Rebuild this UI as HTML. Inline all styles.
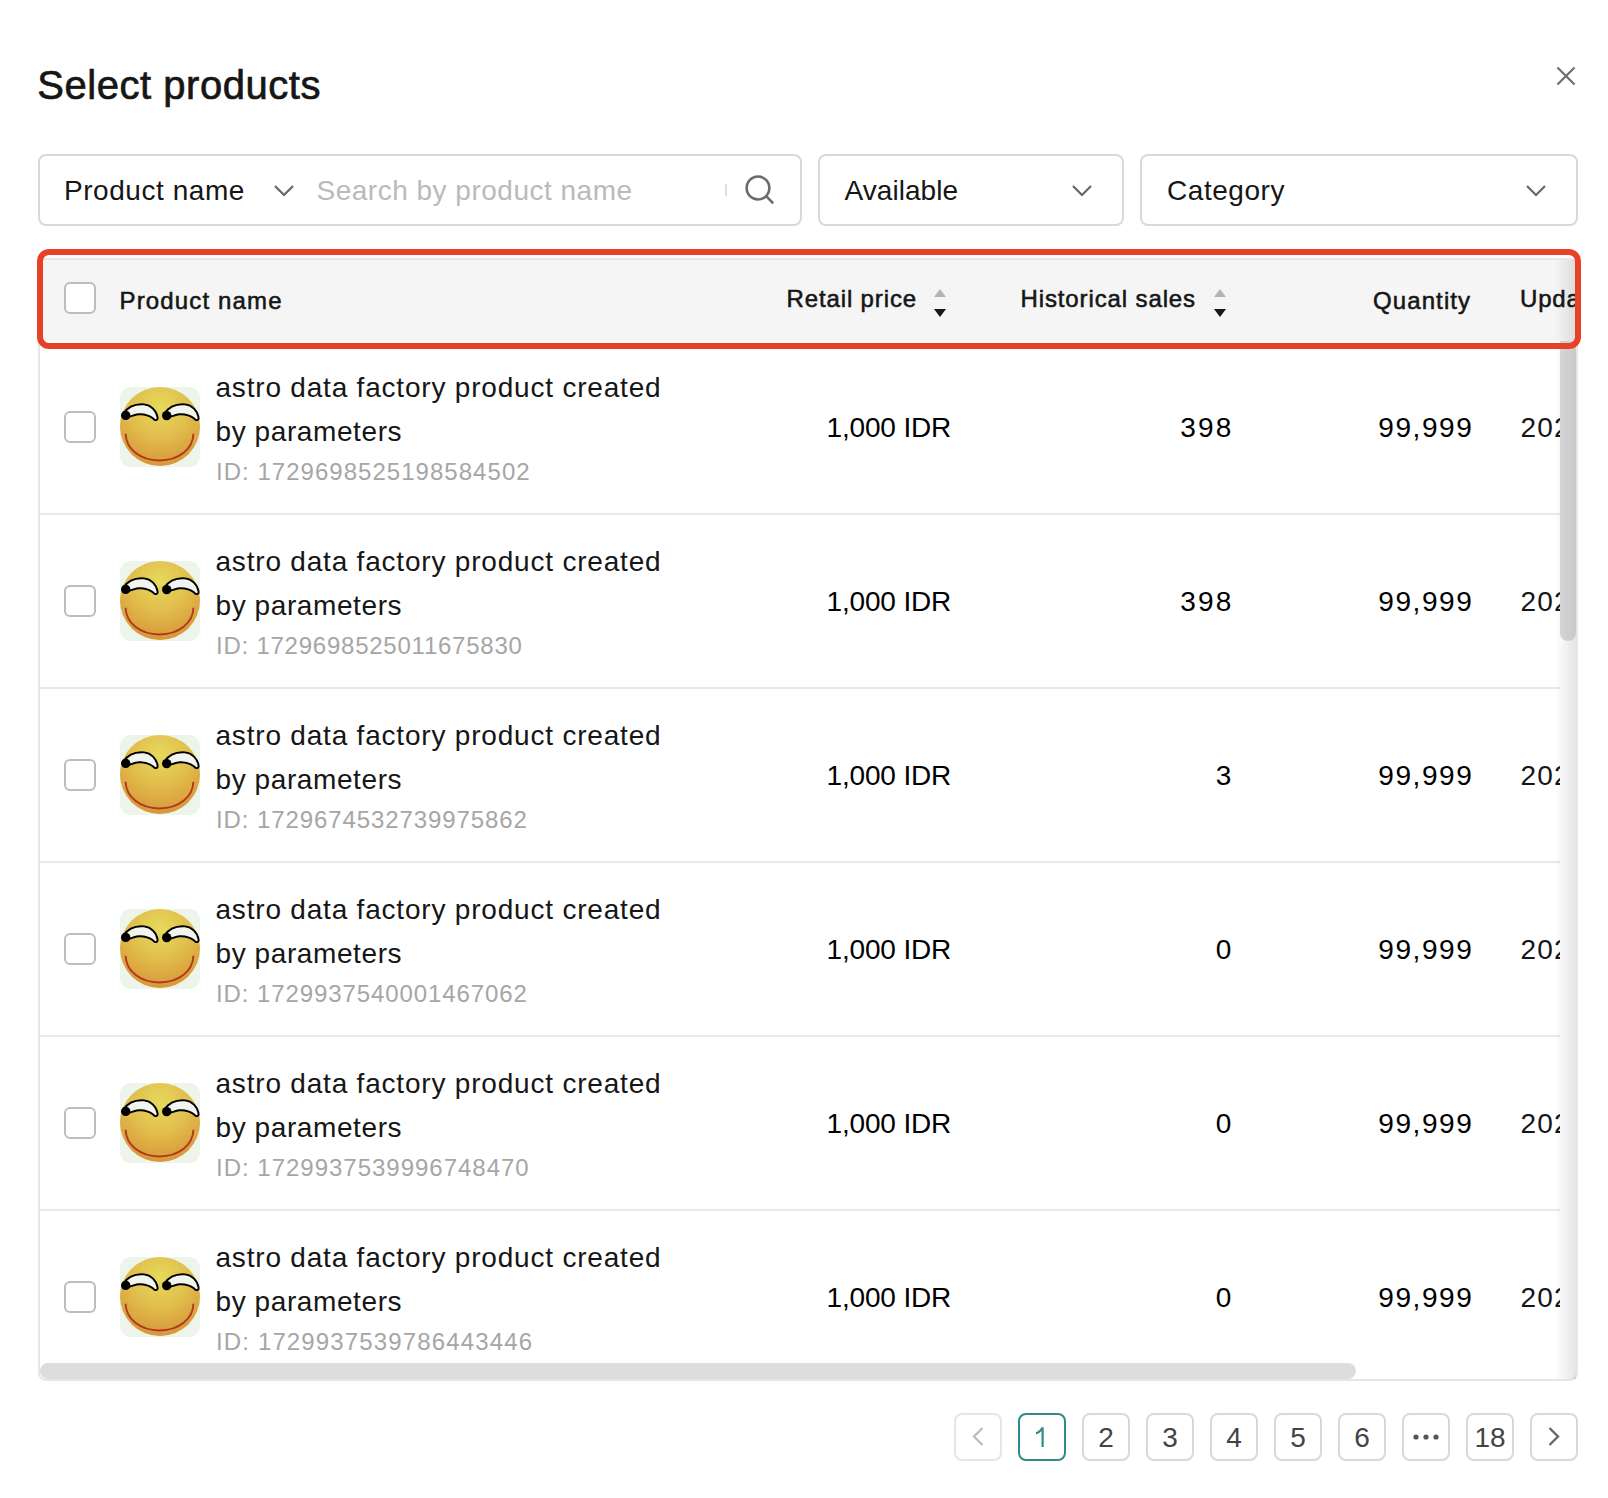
<!DOCTYPE html>
<html><head><meta charset="utf-8"><title>Select products</title>
<style>
html,body{margin:0;padding:0;background:#fff;width:1608px;height:1498px;overflow:hidden;position:relative}
.t{position:absolute;white-space:nowrap;font-family:"Liberation Sans", sans-serif}
svg{display:block}
</style></head><body>
<div class="t" style="left:37.3px;top:65px;font-size:40px;line-height:40px;font-weight:400;color:#161616;letter-spacing:0.53px;-webkit-text-stroke:0.7px #161616">Select products</div><svg style="position:absolute;left:1556px;top:66px" width="20" height="20" viewBox="0 0 20 20"><path d="M2.2,2.2 L17.8,17.8 M17.8,2.2 L2.2,17.8" stroke="#6e6e6e" stroke-width="2.2" stroke-linecap="square"/></svg><div style="position:absolute;left:38px;top:154px;width:764px;height:72px;box-sizing:border-box;border:2px solid #d9d9d9;border-radius:8px;background:#fff"></div><div style="position:absolute;left:818px;top:154px;width:306px;height:72px;box-sizing:border-box;border:2px solid #d9d9d9;border-radius:8px;background:#fff"></div><div style="position:absolute;left:1140px;top:154px;width:438px;height:72px;box-sizing:border-box;border:2px solid #d9d9d9;border-radius:8px;background:#fff"></div><div class="t" style="left:64px;top:177px;font-size:28px;line-height:28px;font-weight:400;color:#161616;letter-spacing:0.55px;">Product name</div><svg style="position:absolute;left:272px;top:182.5px" width="24" height="16" viewBox="0 0 24 16"><polyline points="3,3 12,12 21,3" fill="none" stroke="#666" stroke-width="2.2" stroke-linecap="butt" stroke-linejoin="miter"/></svg><div class="t" style="left:316.5px;top:177px;font-size:28px;line-height:28px;font-weight:400;color:#bababa;letter-spacing:0.5px;">Search by product name</div><div style="position:absolute;left:725px;top:184px;width:2px;height:12px;box-sizing:border-box;background:#dedede"></div><svg style="position:absolute;left:740px;top:170px" width="40" height="40" viewBox="0 0 40 40"><circle cx="18" cy="18" r="11.4" fill="none" stroke="#6b6b6b" stroke-width="2.5"/><path d="M26.2,26.2 L33.2,33.4" stroke="#6b6b6b" stroke-width="2.6"/></svg><div class="t" style="left:844.5px;top:177px;font-size:28px;line-height:28px;font-weight:400;color:#161616;letter-spacing:0.05px;">Available</div><svg style="position:absolute;left:1070px;top:182.5px" width="24" height="16" viewBox="0 0 24 16"><polyline points="3,3 12,12 21,3" fill="none" stroke="#666" stroke-width="2.2" stroke-linecap="butt" stroke-linejoin="miter"/></svg><div class="t" style="left:1167px;top:177px;font-size:28px;line-height:28px;font-weight:400;color:#161616;letter-spacing:0.55px;">Category</div><svg style="position:absolute;left:1524px;top:182.5px" width="24" height="16" viewBox="0 0 24 16"><polyline points="3,3 12,12 21,3" fill="none" stroke="#666" stroke-width="2.2" stroke-linecap="butt" stroke-linejoin="miter"/></svg><div style="position:absolute;left:38px;top:258px;width:1540px;height:1123px;box-sizing:border-box;border:2px solid #e6e6e6;border-radius:8px;background:#fff"></div><div style="position:absolute;left:40px;top:260px;width:1536px;height:81px;box-sizing:border-box;background:#f5f5f5;border-radius:6px 6px 0 0"></div><div style="position:absolute;left:64px;top:282px;width:32px;height:32px;box-sizing:border-box;border:2px solid #bdbdbd;border-radius:6px;background:#fff"></div><div class="t" style="left:119.5px;top:289px;font-size:24px;line-height:24px;font-weight:400;color:#161616;letter-spacing:1.15px;-webkit-text-stroke:0.55px #161616">Product name</div><div class="t" style="left:786.5px;top:287px;font-size:24px;line-height:24px;font-weight:400;color:#161616;letter-spacing:0.87px;-webkit-text-stroke:0.55px #161616">Retail price</div><div class="t" style="left:1020.5px;top:287px;font-size:24px;line-height:24px;font-weight:400;color:#161616;letter-spacing:0.88px;-webkit-text-stroke:0.55px #161616">Historical sales</div><div class="t" style="left:1373px;top:289px;font-size:24px;line-height:24px;font-weight:400;color:#161616;letter-spacing:1.1px;-webkit-text-stroke:0.55px #161616">Quantity</div><svg style="position:absolute;left:933px;top:286px" width="14" height="34" viewBox="0 0 14 34"><path d="M1,11 L13,11 L7,3 Z" fill="#b3b3b3"/><path d="M1,23 L13,23 L7,31 Z" fill="#161616"/></svg><svg style="position:absolute;left:1213px;top:286px" width="14" height="34" viewBox="0 0 14 34"><path d="M1,11 L13,11 L7,3 Z" fill="#b3b3b3"/><path d="M1,23 L13,23 L7,31 Z" fill="#161616"/></svg><div style="position:absolute;left:1500px;top:260px;width:76px;height:81px;overflow:hidden"><div class="t" style="left:20px;top:27px;font-size:24px;line-height:24px;font-weight:400;color:#161616;letter-spacing:0.8px;-webkit-text-stroke:0.55px #161616">Updated time</div></div><div style="position:absolute;left:40px;top:340px;width:1520px;height:1023px;overflow:hidden"><div style="position:absolute;left:24px;top:71px;width:32px;height:32px;box-sizing:border-box;border:2px solid #bdbdbd;border-radius:6px;background:#fff"></div><svg style="position:absolute;left:80px;top:47px" width="80" height="80" viewBox="0 0 80 80">
<defs><radialGradient id="fg0" cx="50%" cy="26%" r="74%"><stop offset="0" stop-color="#e6da5e"/><stop offset="0.5" stop-color="#e1be4c"/><stop offset="1" stop-color="#d8963a"/></radialGradient></defs>
<rect x="0" y="0" width="80" height="80" rx="11" fill="#edf4ea"/>
<ellipse cx="40" cy="39.5" rx="40" ry="39.5" fill="url(#fg0)"/>
<path d="M3,27 C8,19.5 16.5,16.8 24,17.4 C31,18 36.5,23.5 37.6,30.6 C37.9,33.4 35.2,34 33.2,31.6 C29.6,28.8 25,27 19,27.3 C14,27.6 10,29.6 6,31.2 Z" fill="#f2f4ef" stroke="#000" stroke-width="1.9" stroke-linejoin="round"/>
<path d="M44,27 C49,19.5 57.5,16.8 65,17.4 C72,18 77.5,23.5 78.6,30.6 C78.9,33.4 76.2,34 74.2,31.6 C70.6,28.8 66,27 60,27.3 C55,27.6 51,29.6 47,31.2 Z" fill="#f2f4ef" stroke="#000" stroke-width="1.9" stroke-linejoin="round"/>
<circle cx="5.7" cy="28.4" r="4.7" fill="#000"/>
<circle cx="46.7" cy="28.6" r="4.7" fill="#000"/>
<path d="M5.6,46.8 C6,62 20,73.5 39.5,73.5 C59,73.5 73,62 73.4,46.8" fill="none" stroke="#b0381d" stroke-width="1.9"/>
</svg><div class="t" style="left:175.5px;top:34px;font-size:28px;line-height:28px;font-weight:400;color:#161616;letter-spacing:0.8px;">astro data factory product created</div><div class="t" style="left:175.5px;top:78px;font-size:28px;line-height:28px;font-weight:400;color:#161616;letter-spacing:0.59px;">by parameters</div><div class="t" style="left:176px;top:120px;font-size:24px;line-height:24px;font-weight:400;color:#a6a6a6;letter-spacing:1.03px;">ID: 1729698525198584502</div><div class="t" style="left:0;width:911.2px;text-align:right;top:74px;font-size:28px;line-height:28px;letter-spacing:-0.15px">1,000 IDR</div><div class="t" style="left:0;width:1193.5px;text-align:right;top:74px;font-size:28px;line-height:28px;letter-spacing:2.2px">398</div><div class="t" style="left:0;width:1433.3px;text-align:right;top:74px;font-size:28px;line-height:28px;letter-spacing:1.55px">99,999</div><div class="t" style="left:1480.5px;top:74px;font-size:28px;line-height:28px;font-weight:400;color:#161616;letter-spacing:1.2px;">2024/10/24 10:00</div><div style="position:absolute;left:0px;top:173px;width:1520px;height:2px;box-sizing:border-box;background:#e8e8e8"></div><div style="position:absolute;left:24px;top:245px;width:32px;height:32px;box-sizing:border-box;border:2px solid #bdbdbd;border-radius:6px;background:#fff"></div><svg style="position:absolute;left:80px;top:221px" width="80" height="80" viewBox="0 0 80 80">
<defs><radialGradient id="fg1" cx="50%" cy="26%" r="74%"><stop offset="0" stop-color="#e6da5e"/><stop offset="0.5" stop-color="#e1be4c"/><stop offset="1" stop-color="#d8963a"/></radialGradient></defs>
<rect x="0" y="0" width="80" height="80" rx="11" fill="#edf4ea"/>
<ellipse cx="40" cy="39.5" rx="40" ry="39.5" fill="url(#fg1)"/>
<path d="M3,27 C8,19.5 16.5,16.8 24,17.4 C31,18 36.5,23.5 37.6,30.6 C37.9,33.4 35.2,34 33.2,31.6 C29.6,28.8 25,27 19,27.3 C14,27.6 10,29.6 6,31.2 Z" fill="#f2f4ef" stroke="#000" stroke-width="1.9" stroke-linejoin="round"/>
<path d="M44,27 C49,19.5 57.5,16.8 65,17.4 C72,18 77.5,23.5 78.6,30.6 C78.9,33.4 76.2,34 74.2,31.6 C70.6,28.8 66,27 60,27.3 C55,27.6 51,29.6 47,31.2 Z" fill="#f2f4ef" stroke="#000" stroke-width="1.9" stroke-linejoin="round"/>
<circle cx="5.7" cy="28.4" r="4.7" fill="#000"/>
<circle cx="46.7" cy="28.6" r="4.7" fill="#000"/>
<path d="M5.6,46.8 C6,62 20,73.5 39.5,73.5 C59,73.5 73,62 73.4,46.8" fill="none" stroke="#b0381d" stroke-width="1.9"/>
</svg><div class="t" style="left:175.5px;top:208px;font-size:28px;line-height:28px;font-weight:400;color:#161616;letter-spacing:0.8px;">astro data factory product created</div><div class="t" style="left:175.5px;top:252px;font-size:28px;line-height:28px;font-weight:400;color:#161616;letter-spacing:0.59px;">by parameters</div><div class="t" style="left:176px;top:294px;font-size:24px;line-height:24px;font-weight:400;color:#a6a6a6;letter-spacing:0.76px;">ID: 1729698525011675830</div><div class="t" style="left:0;width:911.2px;text-align:right;top:248px;font-size:28px;line-height:28px;letter-spacing:-0.15px">1,000 IDR</div><div class="t" style="left:0;width:1193.5px;text-align:right;top:248px;font-size:28px;line-height:28px;letter-spacing:2.2px">398</div><div class="t" style="left:0;width:1433.3px;text-align:right;top:248px;font-size:28px;line-height:28px;letter-spacing:1.55px">99,999</div><div class="t" style="left:1480.5px;top:248px;font-size:28px;line-height:28px;font-weight:400;color:#161616;letter-spacing:1.2px;">2024/10/24 10:00</div><div style="position:absolute;left:0px;top:347px;width:1520px;height:2px;box-sizing:border-box;background:#e8e8e8"></div><div style="position:absolute;left:24px;top:419px;width:32px;height:32px;box-sizing:border-box;border:2px solid #bdbdbd;border-radius:6px;background:#fff"></div><svg style="position:absolute;left:80px;top:395px" width="80" height="80" viewBox="0 0 80 80">
<defs><radialGradient id="fg2" cx="50%" cy="26%" r="74%"><stop offset="0" stop-color="#e6da5e"/><stop offset="0.5" stop-color="#e1be4c"/><stop offset="1" stop-color="#d8963a"/></radialGradient></defs>
<rect x="0" y="0" width="80" height="80" rx="11" fill="#edf4ea"/>
<ellipse cx="40" cy="39.5" rx="40" ry="39.5" fill="url(#fg2)"/>
<path d="M3,27 C8,19.5 16.5,16.8 24,17.4 C31,18 36.5,23.5 37.6,30.6 C37.9,33.4 35.2,34 33.2,31.6 C29.6,28.8 25,27 19,27.3 C14,27.6 10,29.6 6,31.2 Z" fill="#f2f4ef" stroke="#000" stroke-width="1.9" stroke-linejoin="round"/>
<path d="M44,27 C49,19.5 57.5,16.8 65,17.4 C72,18 77.5,23.5 78.6,30.6 C78.9,33.4 76.2,34 74.2,31.6 C70.6,28.8 66,27 60,27.3 C55,27.6 51,29.6 47,31.2 Z" fill="#f2f4ef" stroke="#000" stroke-width="1.9" stroke-linejoin="round"/>
<circle cx="5.7" cy="28.4" r="4.7" fill="#000"/>
<circle cx="46.7" cy="28.6" r="4.7" fill="#000"/>
<path d="M5.6,46.8 C6,62 20,73.5 39.5,73.5 C59,73.5 73,62 73.4,46.8" fill="none" stroke="#b0381d" stroke-width="1.9"/>
</svg><div class="t" style="left:175.5px;top:382px;font-size:28px;line-height:28px;font-weight:400;color:#161616;letter-spacing:0.8px;">astro data factory product created</div><div class="t" style="left:175.5px;top:426px;font-size:28px;line-height:28px;font-weight:400;color:#161616;letter-spacing:0.59px;">by parameters</div><div class="t" style="left:176px;top:468px;font-size:24px;line-height:24px;font-weight:400;color:#a6a6a6;letter-spacing:0.9px;">ID: 1729674532739975862</div><div class="t" style="left:0;width:911.2px;text-align:right;top:422px;font-size:28px;line-height:28px;letter-spacing:-0.15px">1,000 IDR</div><div class="t" style="left:0;width:1193.5px;text-align:right;top:422px;font-size:28px;line-height:28px;letter-spacing:2.2px">3</div><div class="t" style="left:0;width:1433.3px;text-align:right;top:422px;font-size:28px;line-height:28px;letter-spacing:1.55px">99,999</div><div class="t" style="left:1480.5px;top:422px;font-size:28px;line-height:28px;font-weight:400;color:#161616;letter-spacing:1.2px;">2024/10/24 10:00</div><div style="position:absolute;left:0px;top:521px;width:1520px;height:2px;box-sizing:border-box;background:#e8e8e8"></div><div style="position:absolute;left:24px;top:593px;width:32px;height:32px;box-sizing:border-box;border:2px solid #bdbdbd;border-radius:6px;background:#fff"></div><svg style="position:absolute;left:80px;top:569px" width="80" height="80" viewBox="0 0 80 80">
<defs><radialGradient id="fg3" cx="50%" cy="26%" r="74%"><stop offset="0" stop-color="#e6da5e"/><stop offset="0.5" stop-color="#e1be4c"/><stop offset="1" stop-color="#d8963a"/></radialGradient></defs>
<rect x="0" y="0" width="80" height="80" rx="11" fill="#edf4ea"/>
<ellipse cx="40" cy="39.5" rx="40" ry="39.5" fill="url(#fg3)"/>
<path d="M3,27 C8,19.5 16.5,16.8 24,17.4 C31,18 36.5,23.5 37.6,30.6 C37.9,33.4 35.2,34 33.2,31.6 C29.6,28.8 25,27 19,27.3 C14,27.6 10,29.6 6,31.2 Z" fill="#f2f4ef" stroke="#000" stroke-width="1.9" stroke-linejoin="round"/>
<path d="M44,27 C49,19.5 57.5,16.8 65,17.4 C72,18 77.5,23.5 78.6,30.6 C78.9,33.4 76.2,34 74.2,31.6 C70.6,28.8 66,27 60,27.3 C55,27.6 51,29.6 47,31.2 Z" fill="#f2f4ef" stroke="#000" stroke-width="1.9" stroke-linejoin="round"/>
<circle cx="5.7" cy="28.4" r="4.7" fill="#000"/>
<circle cx="46.7" cy="28.6" r="4.7" fill="#000"/>
<path d="M5.6,46.8 C6,62 20,73.5 39.5,73.5 C59,73.5 73,62 73.4,46.8" fill="none" stroke="#b0381d" stroke-width="1.9"/>
</svg><div class="t" style="left:175.5px;top:556px;font-size:28px;line-height:28px;font-weight:400;color:#161616;letter-spacing:0.8px;">astro data factory product created</div><div class="t" style="left:175.5px;top:600px;font-size:28px;line-height:28px;font-weight:400;color:#161616;letter-spacing:0.59px;">by parameters</div><div class="t" style="left:176px;top:642px;font-size:24px;line-height:24px;font-weight:400;color:#a6a6a6;letter-spacing:0.9px;">ID: 1729937540001467062</div><div class="t" style="left:0;width:911.2px;text-align:right;top:596px;font-size:28px;line-height:28px;letter-spacing:-0.15px">1,000 IDR</div><div class="t" style="left:0;width:1193.5px;text-align:right;top:596px;font-size:28px;line-height:28px;letter-spacing:2.2px">0</div><div class="t" style="left:0;width:1433.3px;text-align:right;top:596px;font-size:28px;line-height:28px;letter-spacing:1.55px">99,999</div><div class="t" style="left:1480.5px;top:596px;font-size:28px;line-height:28px;font-weight:400;color:#161616;letter-spacing:1.2px;">2024/10/24 10:00</div><div style="position:absolute;left:0px;top:695px;width:1520px;height:2px;box-sizing:border-box;background:#e8e8e8"></div><div style="position:absolute;left:24px;top:767px;width:32px;height:32px;box-sizing:border-box;border:2px solid #bdbdbd;border-radius:6px;background:#fff"></div><svg style="position:absolute;left:80px;top:743px" width="80" height="80" viewBox="0 0 80 80">
<defs><radialGradient id="fg4" cx="50%" cy="26%" r="74%"><stop offset="0" stop-color="#e6da5e"/><stop offset="0.5" stop-color="#e1be4c"/><stop offset="1" stop-color="#d8963a"/></radialGradient></defs>
<rect x="0" y="0" width="80" height="80" rx="11" fill="#edf4ea"/>
<ellipse cx="40" cy="39.5" rx="40" ry="39.5" fill="url(#fg4)"/>
<path d="M3,27 C8,19.5 16.5,16.8 24,17.4 C31,18 36.5,23.5 37.6,30.6 C37.9,33.4 35.2,34 33.2,31.6 C29.6,28.8 25,27 19,27.3 C14,27.6 10,29.6 6,31.2 Z" fill="#f2f4ef" stroke="#000" stroke-width="1.9" stroke-linejoin="round"/>
<path d="M44,27 C49,19.5 57.5,16.8 65,17.4 C72,18 77.5,23.5 78.6,30.6 C78.9,33.4 76.2,34 74.2,31.6 C70.6,28.8 66,27 60,27.3 C55,27.6 51,29.6 47,31.2 Z" fill="#f2f4ef" stroke="#000" stroke-width="1.9" stroke-linejoin="round"/>
<circle cx="5.7" cy="28.4" r="4.7" fill="#000"/>
<circle cx="46.7" cy="28.6" r="4.7" fill="#000"/>
<path d="M5.6,46.8 C6,62 20,73.5 39.5,73.5 C59,73.5 73,62 73.4,46.8" fill="none" stroke="#b0381d" stroke-width="1.9"/>
</svg><div class="t" style="left:175.5px;top:730px;font-size:28px;line-height:28px;font-weight:400;color:#161616;letter-spacing:0.8px;">astro data factory product created</div><div class="t" style="left:175.5px;top:774px;font-size:28px;line-height:28px;font-weight:400;color:#161616;letter-spacing:0.59px;">by parameters</div><div class="t" style="left:176px;top:816px;font-size:24px;line-height:24px;font-weight:400;color:#a6a6a6;letter-spacing:0.99px;">ID: 1729937539996748470</div><div class="t" style="left:0;width:911.2px;text-align:right;top:770px;font-size:28px;line-height:28px;letter-spacing:-0.15px">1,000 IDR</div><div class="t" style="left:0;width:1193.5px;text-align:right;top:770px;font-size:28px;line-height:28px;letter-spacing:2.2px">0</div><div class="t" style="left:0;width:1433.3px;text-align:right;top:770px;font-size:28px;line-height:28px;letter-spacing:1.55px">99,999</div><div class="t" style="left:1480.5px;top:770px;font-size:28px;line-height:28px;font-weight:400;color:#161616;letter-spacing:1.2px;">2024/10/24 10:00</div><div style="position:absolute;left:0px;top:869px;width:1520px;height:2px;box-sizing:border-box;background:#e8e8e8"></div><div style="position:absolute;left:24px;top:941px;width:32px;height:32px;box-sizing:border-box;border:2px solid #bdbdbd;border-radius:6px;background:#fff"></div><svg style="position:absolute;left:80px;top:917px" width="80" height="80" viewBox="0 0 80 80">
<defs><radialGradient id="fg5" cx="50%" cy="26%" r="74%"><stop offset="0" stop-color="#e6da5e"/><stop offset="0.5" stop-color="#e1be4c"/><stop offset="1" stop-color="#d8963a"/></radialGradient></defs>
<rect x="0" y="0" width="80" height="80" rx="11" fill="#edf4ea"/>
<ellipse cx="40" cy="39.5" rx="40" ry="39.5" fill="url(#fg5)"/>
<path d="M3,27 C8,19.5 16.5,16.8 24,17.4 C31,18 36.5,23.5 37.6,30.6 C37.9,33.4 35.2,34 33.2,31.6 C29.6,28.8 25,27 19,27.3 C14,27.6 10,29.6 6,31.2 Z" fill="#f2f4ef" stroke="#000" stroke-width="1.9" stroke-linejoin="round"/>
<path d="M44,27 C49,19.5 57.5,16.8 65,17.4 C72,18 77.5,23.5 78.6,30.6 C78.9,33.4 76.2,34 74.2,31.6 C70.6,28.8 66,27 60,27.3 C55,27.6 51,29.6 47,31.2 Z" fill="#f2f4ef" stroke="#000" stroke-width="1.9" stroke-linejoin="round"/>
<circle cx="5.7" cy="28.4" r="4.7" fill="#000"/>
<circle cx="46.7" cy="28.6" r="4.7" fill="#000"/>
<path d="M5.6,46.8 C6,62 20,73.5 39.5,73.5 C59,73.5 73,62 73.4,46.8" fill="none" stroke="#b0381d" stroke-width="1.9"/>
</svg><div class="t" style="left:175.5px;top:904px;font-size:28px;line-height:28px;font-weight:400;color:#161616;letter-spacing:0.8px;">astro data factory product created</div><div class="t" style="left:175.5px;top:948px;font-size:28px;line-height:28px;font-weight:400;color:#161616;letter-spacing:0.59px;">by parameters</div><div class="t" style="left:176px;top:990px;font-size:24px;line-height:24px;font-weight:400;color:#a6a6a6;letter-spacing:1.14px;">ID: 1729937539786443446</div><div class="t" style="left:0;width:911.2px;text-align:right;top:944px;font-size:28px;line-height:28px;letter-spacing:-0.15px">1,000 IDR</div><div class="t" style="left:0;width:1193.5px;text-align:right;top:944px;font-size:28px;line-height:28px;letter-spacing:2.2px">0</div><div class="t" style="left:0;width:1433.3px;text-align:right;top:944px;font-size:28px;line-height:28px;letter-spacing:1.55px">99,999</div><div class="t" style="left:1480.5px;top:944px;font-size:28px;line-height:28px;font-weight:400;color:#161616;letter-spacing:1.2px;">2024/10/24 10:00</div><div style="position:absolute;left:0px;top:1043px;width:1520px;height:2px;box-sizing:border-box;background:#e8e8e8"></div></div><div style="position:absolute;left:40px;top:1363px;width:1316px;height:16px;box-sizing:border-box;background:#dddddd;border-radius:8px"></div><div style="position:absolute;left:1555px;top:260px;width:21px;height:1119px;box-sizing:border-box;background:linear-gradient(to right, rgba(0,0,0,0), rgba(0,0,0,0.1))"></div><div style="position:absolute;left:1560px;top:341px;width:16px;height:300px;box-sizing:border-box;background:linear-gradient(to right,#d5d5d5,#c9c9c9);border-radius:0 0 8px 8px"></div><div style="position:absolute;left:37px;top:249px;width:1544px;height:100px;box-sizing:border-box;border:6px solid #e8412a;border-radius:12px"></div><div style="position:absolute;left:954px;top:1413px;width:48px;height:48px;box-sizing:border-box;border:2px solid #e6e6e6;border-radius:8px;background:#fff"></div><svg style="position:absolute;left:954px;top:1413px" width="48" height="48" viewBox="0 0 48 48"><polyline points="28.5,15 20,23.5 28.5,32" fill="none" stroke="#bdbdbd" stroke-width="2.3"/></svg><div style="position:absolute;left:1018px;top:1413px;width:48px;height:48px;box-sizing:border-box;border:2px solid #2e8c88;border-radius:8px;background:#fff"></div><svg style="position:absolute;left:1018px;top:1413px" width="48" height="48" viewBox="0 0 48 48"><path d="M24.6,14.2 L24.6,34 M24.6,14.6 C23.2,17.4 20.6,19.6 18,20.4" fill="none" stroke="#2e8c88" stroke-width="2.2"/></svg><div style="position:absolute;left:1082px;top:1413px;width:48px;height:48px;box-sizing:border-box;border:2px solid #d9d9d9;border-radius:8px;background:#fff"></div><div class="t" style="left:1082px;width:48px;text-align:center;top:1424px;font-size:28px;line-height:28px;color:#444">2</div><div style="position:absolute;left:1146px;top:1413px;width:48px;height:48px;box-sizing:border-box;border:2px solid #d9d9d9;border-radius:8px;background:#fff"></div><div class="t" style="left:1146px;width:48px;text-align:center;top:1424px;font-size:28px;line-height:28px;color:#444">3</div><div style="position:absolute;left:1210px;top:1413px;width:48px;height:48px;box-sizing:border-box;border:2px solid #d9d9d9;border-radius:8px;background:#fff"></div><div class="t" style="left:1210px;width:48px;text-align:center;top:1424px;font-size:28px;line-height:28px;color:#444">4</div><div style="position:absolute;left:1274px;top:1413px;width:48px;height:48px;box-sizing:border-box;border:2px solid #d9d9d9;border-radius:8px;background:#fff"></div><div class="t" style="left:1274px;width:48px;text-align:center;top:1424px;font-size:28px;line-height:28px;color:#444">5</div><div style="position:absolute;left:1338px;top:1413px;width:48px;height:48px;box-sizing:border-box;border:2px solid #d9d9d9;border-radius:8px;background:#fff"></div><div class="t" style="left:1338px;width:48px;text-align:center;top:1424px;font-size:28px;line-height:28px;color:#444">6</div><div style="position:absolute;left:1402px;top:1413px;width:48px;height:48px;box-sizing:border-box;border:2px solid #d9d9d9;border-radius:8px;background:#fff"></div><svg style="position:absolute;left:1402px;top:1413px" width="48" height="48" viewBox="0 0 48 48"><circle cx="14" cy="24" r="2.6" fill="#555"/><circle cx="24" cy="24" r="2.6" fill="#555"/><circle cx="34" cy="24" r="2.6" fill="#555"/></svg><div style="position:absolute;left:1466px;top:1413px;width:48px;height:48px;box-sizing:border-box;border:2px solid #d9d9d9;border-radius:8px;background:#fff"></div><div class="t" style="left:1466px;width:48px;text-align:center;top:1424px;font-size:28px;line-height:28px;color:#444">18</div><div style="position:absolute;left:1530px;top:1413px;width:48px;height:48px;box-sizing:border-box;border:2px solid #d9d9d9;border-radius:8px;background:#fff"></div><svg style="position:absolute;left:1530px;top:1413px" width="48" height="48" viewBox="0 0 48 48"><polyline points="19.5,15 28,23.5 19.5,32" fill="none" stroke="#666" stroke-width="2.3"/></svg>
</body></html>
